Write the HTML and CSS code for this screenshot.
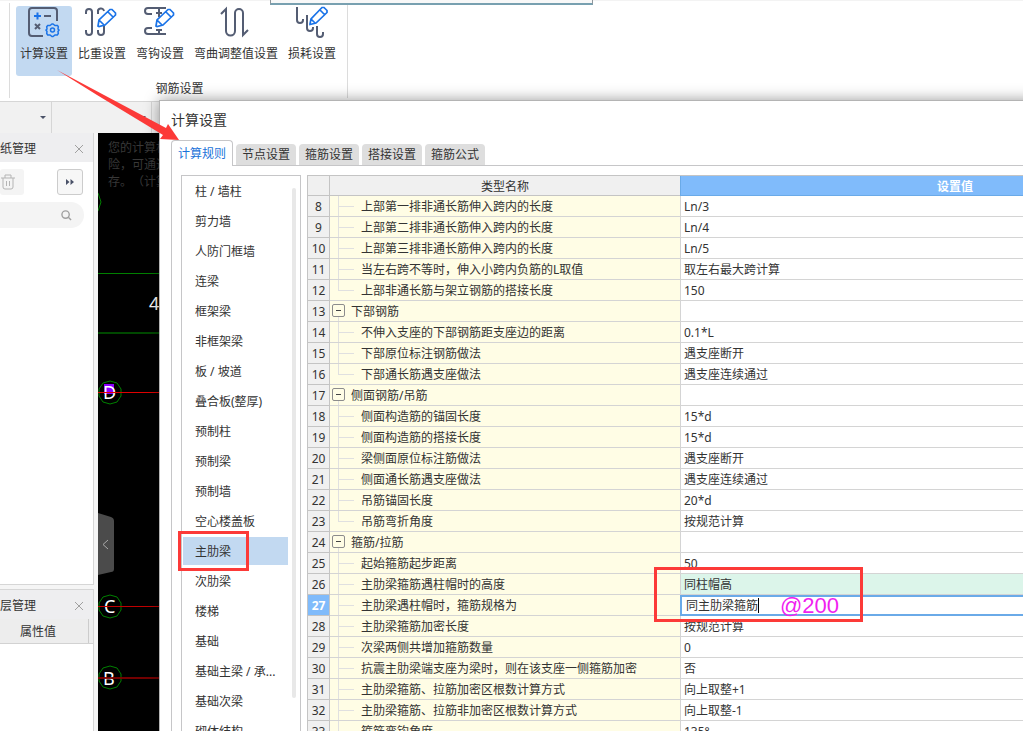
FILE: index.html
```html
<!DOCTYPE html>
<html lang="zh-CN">
<head>
<meta charset="utf-8">
<title>计算设置</title>
<link rel="stylesheet" href="styles.css">
</head>
<body>
<div class="app">
  <header class="ribbon">
    <section class="ribbon-group">
      <div class="tools">
        <button class="tool active">
          <svg class="tool-icon" viewBox="0 0 32 32"><path class="ink" d="M15 30H4a3 3 0 0 1-3-3V5a3 3 0 0 1 3-3h22a3 3 0 0 1 3 3v10M16 10h7M7 18l5 5M12 18l-5 5"/><path class="blue" d="M6 10h7M9.500 6.500v7"/><path class="blue thin" d="M22 19.500l2 -1.500h1l2 1.500 2.500 0 .8 1.200-.3 2.300 1 1-1 1.500 .3 2-1 1.500-2.300 0-2 1.500h-1l-2-1.500-2.300 0-1-1.500 .3-2-1-1.500 1-1-.3-2.300 1-1.200z"/><circle class="blue thin" cx="24.500" cy="24" r="2"/></svg>
          <span>计算设置</span>
        </button>
        <button class="tool">
          <svg class="tool-icon" viewBox="0 0 32 32"><path class="ink" d="M0 8V6a3 3 0 0 1 6 0v20a3 3 0 0 1-6 0v-2M12 8V6a3 3 0 0 1 6-1M18 20v6a3 3 0 0 1-6 0v-2"/><path class="blue pencil" d="M12 20l1-6L24 3.500h2l3.500 3.500v2L19 19l-6 1.500zM22 6l5 5M13 14l5 5"/></svg>
          <span>比重设置</span>
        </button>
        <button class="tool">
          <svg class="tool-icon" viewBox="0 0 32 32"><path class="ink" d="M8 8H4a3 3 0 0 1 0-6h18M15 2v9M12 7h6M8 22H4a3 3 0 0 0 0 6h18M15 28v-5M12 24h6"/><path class="blue pencil" d="M12 20l1-6L24 3.500h2l3.500 3.500v2L19 19l-6 1.500zM22 6l5 5M13 14l5 5"/></svg>
          <span>弯钩设置</span>
        </button>
        <button class="tool">
          <svg class="tool-icon" viewBox="0 0 32 32"><path class="ink" d="M1 8l5-5v22a4.500 4.500 0 0 0 9 0V7a4 4 0 0 1 8 0v22l5-5"/></svg>
          <span>弯曲调整值设置</span>
        </button>
        <button class="tool">
          <svg class="tool-icon" viewBox="0 0 32 32"><path class="ink" d="M1 1v13a3 3 0 0 0 6 0v-1M11 9v13a3 3 0 0 0 6 0v-1M21 20v8a3 3 0 0 0 6 0v-2"/><path class="blue pencil" d="M14 18l1-5L26 1.500h2l3 3v2L20 17l-6 1.500zM24 4l4.500 4.500M15 13l4.500 4.500"/></svg>
          <span>损耗设置</span>
        </button>
      </div>
      <h2 class="group-title">钢筋设置</h2>
    </section>
    <div class="float-strip"></div>
  </header>

  <div class="subbar">
    <button class="drop drop-a" aria-label="选择楼层"></button>
    <button class="drop drop-b" aria-label="选择构件"></button>
  </div>

  <main class="work">
    <aside class="side">
      <section class="panel panel-top">
        <header class="panel-head"><h3>纸管理</h3><button class="close" aria-label="关闭"><svg viewBox="0 0 10 10"><path d="M1 1l8 8M9 1l-8 8"/></svg></button></header>
        <div class="panel-tools">
          <button class="trash" aria-label="删除"><svg viewBox="0 0 16 16"><path d="M1 4h14M5 4V1h6v3M3 4v9a2 2 0 0 0 2 2h6a2 2 0 0 0 2-2V4M6.500 7v5M9.500 7v5"/></svg></button>
          <button class="more" aria-label="更多"><svg viewBox="0 0 8 6"><path d="M0 0l3.500 3L0 6zM4.500 0L8 3 4.500 6z"/></svg></button>
        </div>
        <label class="search"><input type="text" aria-label="搜索"><svg viewBox="0 0 12 12"><circle cx="5" cy="5" r="4"/><path d="M8 8l3 3"/></svg></label>
      </section>
      <section class="panel panel-low">
        <header class="panel-head"><h3>层管理</h3><button class="close" aria-label="关闭"><svg viewBox="0 0 10 10"><path d="M1 1l8 8M9 1l-8 8"/></svg></button></header>
        <div class="prop-head"><span>属性值</span></div>
      </section>
    </aside>
    <div class="canvas">
      <svg class="drawing" width="62" height="598" viewBox="0 0 62 598">
        <path d="M0 60l3 9-3 9" fill="none" stroke="#008000"/>
        <path d="M0 140.500h62" stroke="#008000"/>
        <path d="M0 200h62" stroke="#004800" stroke-width="2"/>
        <rect x="6" y="251" width="10" height="10" fill="#8a00ff"/>
        <g fill="none" stroke="#008000">
          <path id="bubble" d="M12 248l7 2 4 6v7l-4 6-7 2-7-2-4-6v-7l4-6z"/>
          <use href="#bubble" y="214"/>
          <use href="#bubble" y="285"/>
        </g>
        <g class="axis">
          <text x="51" y="177">4</text>
          <text x="5" y="266">D</text>
          <text x="6" y="480">C</text>
          <text x="5" y="552">B</text>
        </g>
        <path d="M0 259.500h62" stroke="#e00000"/>
        <path d="M0 473.500h62" stroke="#c00000"/>
        <path d="M0 545h62" stroke="#800000" stroke-width="2" opacity=".9"/>
        <path d="M0 380l13 4q3 1 3 4v48q0 3-3 3L0 442z" fill="#4b4b4b"/>
        <path d="M10 407l-5 4.500 5 4.500" fill="none" stroke="#aaa"/>
      </svg>
      <p class="notice">您的计算机<br>险，可通过<br>存。（计算</p>
    </div>
  </main>

  <div class="dialog" role="dialog" aria-labelledby="dlg-title">
    <h1 id="dlg-title">计算设置</h1>
    <nav class="tabs">
      <button class="tab on">计算规则</button>
      <button class="tab">节点设置</button>
      <button class="tab">箍筋设置</button>
      <button class="tab">搭接设置</button>
      <button class="tab">箍筋公式</button>
    </nav>
    <div class="pane">
      <div class="kinds">
        <ul>
          <li><button>柱 / 墙柱</button></li>
          <li><button>剪力墙</button></li>
          <li><button>人防门框墙</button></li>
          <li><button>连梁</button></li>
          <li><button>框架梁</button></li>
          <li><button>非框架梁</button></li>
          <li><button>板 / 坡道</button></li>
          <li><button>叠合板(整厚)</button></li>
          <li><button>预制柱</button></li>
          <li><button>预制梁</button></li>
          <li><button>预制墙</button></li>
          <li><button>空心楼盖板</button></li>
          <li><button class="picked">主肋梁</button></li>
          <li><button>次肋梁</button></li>
          <li><button>楼梯</button></li>
          <li><button>基础</button></li>
          <li><button>基础主梁 / 承...</button></li>
          <li><button>基础次梁</button></li>
          <li><button>砌体结构</button></li>
        </ul>
        <div class="thumb"></div>
      </div>
      <div class="grid-wrap">
      <table class="rules">
        <colgroup><col class="c-num"><col class="c-name"><col></colgroup>
        <thead><tr><th></th><th>类型名称</th><th class="val-head">设置值</th></tr></thead>
        <tbody>
          <tr><th>8</th><td class="leaf">上部第一排非通长筋伸入跨内的长度</td><td>Ln/3</td></tr>
          <tr><th>9</th><td class="leaf">上部第二排非通长筋伸入跨内的长度</td><td>Ln/4</td></tr>
          <tr><th>10</th><td class="leaf">上部第三排非通长筋伸入跨内的长度</td><td>Ln/5</td></tr>
          <tr><th>11</th><td class="leaf">当左右跨不等时，伸入小跨内负筋的L取值</td><td>取左右最大跨计算</td></tr>
          <tr><th>12</th><td class="leaf end">上部非通长筋与架立钢筋的搭接长度</td><td>150</td></tr>
          <tr><th>13</th><td class="branch"><button class="fold" aria-label="折叠"></button>下部钢筋</td><td></td></tr>
          <tr><th>14</th><td class="leaf">不伸入支座的下部钢筋距支座边的距离</td><td>0.1*L</td></tr>
          <tr><th>15</th><td class="leaf">下部原位标注钢筋做法</td><td>遇支座断开</td></tr>
          <tr><th>16</th><td class="leaf end">下部通长筋遇支座做法</td><td>遇支座连续通过</td></tr>
          <tr><th>17</th><td class="branch"><button class="fold" aria-label="折叠"></button>侧面钢筋/吊筋</td><td></td></tr>
          <tr><th>18</th><td class="leaf">侧面构造筋的锚固长度</td><td>15*d</td></tr>
          <tr><th>19</th><td class="leaf">侧面构造筋的搭接长度</td><td>15*d</td></tr>
          <tr><th>20</th><td class="leaf">梁侧面原位标注筋做法</td><td>遇支座断开</td></tr>
          <tr><th>21</th><td class="leaf">侧面通长筋遇支座做法</td><td>遇支座连续通过</td></tr>
          <tr><th>22</th><td class="leaf">吊筋锚固长度</td><td>20*d</td></tr>
          <tr><th>23</th><td class="leaf end">吊筋弯折角度</td><td>按规范计算</td></tr>
          <tr><th>24</th><td class="branch"><button class="fold" aria-label="折叠"></button>箍筋/拉筋</td><td></td></tr>
          <tr><th>25</th><td class="leaf">起始箍筋起步距离</td><td>50</td></tr>
          <tr><th>26</th><td class="leaf">主肋梁箍筋遇柱帽时的高度</td><td class="changed">同柱帽高</td></tr>
          <tr class="current"><th>27</th><td class="leaf">主肋梁遇柱帽时，箍筋规格为</td><td class="editing"><div class="editor"><input type="text" value="同主肋梁箍筋" aria-label="箍筋规格"><i class="caret"></i></div></td></tr>
          <tr><th>28</th><td class="leaf">主肋梁箍筋加密长度</td><td>按规范计算</td></tr>
          <tr><th>29</th><td class="leaf">次梁两侧共增加箍筋数量</td><td>0</td></tr>
          <tr><th>30</th><td class="leaf">抗震主肋梁端支座为梁时，则在该支座一侧箍筋加密</td><td>否</td></tr>
          <tr><th>31</th><td class="leaf">主肋梁箍筋、拉筋加密区根数计算方式</td><td>向上取整+1</td></tr>
          <tr><th>32</th><td class="leaf">主肋梁箍筋、拉筋非加密区根数计算方式</td><td>向上取整-1</td></tr>
          <tr><th>33</th><td class="leaf">箍筋弯钩角度</td><td>135°</td></tr>
        </tbody>
      </table>
      </div>
    </div>
  </div>

  <svg class="arrow" viewBox="0 0 124 72"><path d="M1 0L48 25l62 33 2-4 11 16-19-1 3-4-66-40z"/></svg>
  <div class="mark mark-list"></div>
  <div class="mark mark-cell"></div>
  <span class="note">@200</span>
</div>
</body>
</html>
```

FILE: styles.css
```css
* { box-sizing: border-box; }

body {
  margin: 0;
  font: 12px/20px "Noto Sans", "Noto Sans CJK SC", sans-serif;
  text-spacing-trim: space-all;
  color: #333;
  background: #fff;
}

h1, h2, h3, p, ul { margin: 0; padding: 0; font-weight: normal; }
ul { list-style: none; }

button, input {
  margin: 0;
  padding: 0;
  border: 0;
  background: none;
  font: inherit;
  color: inherit;
}

.app {
  position: relative;
  display: flex;
  flex-direction: column;
  height: 100vh;
  overflow: hidden;
}

/* ribbon */
.ribbon {
  position: relative;
  display: flex;
  padding: 2px 0 3px 9px;
  border-top: 1px solid #f3f3f3;
}
.ribbon-group {
  padding: 3px 7px 0 6px;
  border: solid #dcdcdc;
  border-width: 0 1px;
}
.tools { display: flex; gap: 2px; }
.tool {
  display: flex;
  flex-direction: column;
  align-items: center;
  height: 70px;
  padding: 0 4px;
  gap: 6px;
  border-radius: 3px;
}
.tool.active { background: #c2d9f1; }
.tool-icon { width: 32px; height: 32px; fill: none; overflow: visible; }
.ink { stroke: #545d73; stroke-width: 2; }
.blue { stroke: #1a73e8; stroke-width: 2; }
.thin { stroke-width: 1.5; }
.pencil { stroke-width: 1.7; fill: #fff; }
.group-title {
  padding: 4px 0 0 3px;
  font-size: 12px;
  line-height: 18px;
  text-align: center;
}
.float-strip {
  position: absolute;
  top: -1px;
  left: 270px;
  width: 323px;
  height: 5px;
  background: #f8f8f8;
  border: solid #8f979c;
  border-width: 0 1px 2px;
  border-bottom-color: #78a0b0;
}

/* strip under the ribbon */
.subbar {
  display: flex;
  height: 32px;
  background: #f1f1f1;
  border-top: 1px solid #d6d6d6;
}
.drop {
  display: flex;
  align-items: center;
  justify-content: flex-end;
  padding-right: 5px;
  border-right: 1px solid #d6d6d6;
}
.drop::after {
  content: "";
  border: 3px solid transparent;
  border-top-color: #4a5268;
  border-bottom-width: 0;
}
.drop-a { width: 52px; }
.drop-b { width: 100px; }

/* left panels */
.work { flex: 1; display: flex; min-height: 0; }
.side {
  display: flex;
  flex-direction: column;
  gap: 4px;
  width: 98px;
  padding-right: 4px;
  background: #f5f5f5;
}
.panel { background: #fff; border: 1px solid #d6d6d6; border-left: 0; }
.panel-top { flex: 0 0 452px; border-top: 0; }
.panel-low { flex: 1; border-bottom: 0; }
.panel-head {
  display: flex;
  align-items: center;
  justify-content: space-between;
  height: 29px;
  padding: 2px 9px 0 0;
  background: #eeeef0;
}
.panel-head h3 { font-size: 12px; }
.close { display: flex; }
.close svg { width: 10px; height: 10px; stroke: #a0a0a0; fill: none; }
.panel-tools {
  display: flex;
  justify-content: space-between;
  padding: 7px 10px 7px 0;
}
.trash, .more {
  display: flex;
  align-items: center;
  height: 26px;
  background: #f4f4f4;
  border-radius: 3px;
}
.trash { width: 24px; }
.trash svg { width: 16px; height: 16px; fill: none; stroke: #b4b4b4; }
.more { justify-content: center; width: 26px; border: 1px solid #ccc; background: #f7f7f7; }
.more svg { width: 8px; height: 6px; fill: #4a5268; }
.search {
  display: flex;
  align-items: center;
  height: 26px;
  margin-right: 9px;
  padding-right: 12px;
  border-radius: 0 13px 13px 0;
  background: #f4f4f4;
}
.search input { flex: 1; min-width: 0; }
.search svg { width: 11px; height: 11px; fill: none; stroke: #a0a0a0; stroke-width: 1.5; }
.prop-head {
  display: flex;
  height: 25px;
  background: #ededed;
  border: solid #d2d2d2;
  border-width: 0 0 1px;
}
.prop-head span {
  width: 89px;
  padding-left: 20px;
  line-height: 26px;
  border-right: 1px solid #ccc;
}

/* drawing area */
.canvas { position: relative; flex: 1; background: #000; overflow: hidden; }
.drawing { display: block; }
.axis text { font: 18px "Noto Sans", sans-serif; fill: #fff; }
.notice {
  position: absolute;
  top: 6px;
  left: 10px;
  color: #383838;
  line-height: 17px;
  white-space: nowrap;
}

/* dialog */
.dialog {
  position: absolute;
  top: 100px;
  right: -218px;
  bottom: -40px;
  left: 159px;
  display: flex;
  flex-direction: column;
  padding-left: 11px;
  background: #fff;
  border: 1px solid #b4b4b4;
  box-shadow: 0 0 14px rgba(0, 0, 0, .4);
}
.dialog h1 { padding-bottom: 2px; font-size: 14px; line-height: 37px; }
.tabs {
  display: flex;
  align-items: flex-end;
  gap: 3px;
  border-bottom: 1px solid #c6c6c8;
}
.tab {
  height: 21px;
  padding: 0 6px;
  border-radius: 4px 4px 0 0;
  background: #dedede;
  line-height: 21px;
}
.tab.on {
  height: 26px;
  margin-bottom: -1px;
  border: 1px solid #c6c6c8;
  border-bottom: 0;
  background: #fff;
  color: #1a73d9;
}
.pane {
  flex: 1;
  display: flex;
  gap: 6px;
  min-height: 0;
  padding: 9px 10px 0 9px;
  border-left: 1px solid #c6c6c8;
}
.kinds {
  display: flex;
  justify-content: space-between;
  flex: 0 0 120px;
  padding: 1px 4px 0 1px;
  border: 1px solid #c6c6c8;
  overflow: hidden;
}
.kinds ul { flex: 0 0 105px; }
.kinds li { margin-bottom: 2px; }
.kinds button {
  width: 100%;
  height: 28px;
  padding: 2px 0 0 12px;
  text-align: left;
  white-space: nowrap;
}
.kinds .picked { background: #c2d9f1; }
.thumb { width: 4px; height: 510px; margin-top: 11px; border-radius: 2px; background: #e8e8e8; }

/* rules table */
.grid-wrap { flex: 1; overflow: hidden; border: solid #c4c4c4; border-width: 1px 0 0 1px; }
.rules {
  width: 100%;
  table-layout: fixed;
  border-collapse: separate;
  border-spacing: 0;
}
.c-num { width: 22px; }
.c-name { width: 350px; }
.rules th, .rules td {
  height: 21px;
  padding: 2px 0 0;
  border-bottom: 1px solid #d4d4d4;
  line-height: 18px;
  font-weight: normal;
  white-space: nowrap;
}
.rules th {
  background: #f0f0f0;
  border-right: 1px solid #c4c4c4;
  border-bottom-color: #c4c4c4;
}
.rules thead th { height: 20px; line-height: 17px; }
.rules thead th:nth-child(2) { border-right: 0; }
.rules .val-head {
  background: #80bbfb;
  border: 1px solid #6aaae8;
  border-top: 0;
  color: #fff;
  font-weight: bold;
}
.rules td:nth-child(3) { padding-left: 3px; border-left: 1px solid #d4d4d4; }
.rules .leaf, .rules .branch { position: relative; background: #fffde5; }
.rules .leaf { padding-left: 31px; }
.rules .branch { padding-left: 21px; }
.leaf::before, .leaf::after, .branch::before {
  content: "";
  position: absolute;
  left: 8px;
  background: #e0e0e0;
}
.leaf::before { top: 0; bottom: 0; width: 1px; }
.leaf.end::before { bottom: 10px; }
.leaf::after { top: 10px; width: 16px; height: 1px; }
.branch::before { top: 16px; bottom: 0; width: 1px; }
.fold {
  position: absolute;
  top: 3px;
  left: 2px;
  display: flex;
  align-items: center;
  justify-content: center;
  width: 13px;
  height: 13px;
  border: 1px solid #8c8c8c;
  border-radius: 2px;
  background: #fffde5;
}
.fold::after { content: ""; width: 5px; height: 1px; background: #444; }
.rules .changed { background: #dcf5ea; }
.rules .current th {
  background: #80bbfb;
  color: #fff;
  font-weight: bold;
}
.rules td.editing { padding: 0; border: 0; }
.editor {
  display: flex;
  align-items: center;
  height: 21px;
  padding-left: 4px;
  border: 2px solid #6aaae8;
  background: #fff;
}
.editor input { height: 17px; line-height: 17px; field-sizing: content; outline: 0; }
.caret { width: 1px; height: 15px; background: #000; }

/* annotations */
.arrow { position: absolute; top: 70px; left: 56px; width: 124px; height: 72px; fill: #fc3a38; overflow: visible; }
.mark { position: absolute; border: 3px solid #fc3a38; }
.mark-list { top: 531px; left: 178px; width: 71px; height: 40px; }
.mark-cell { top: 567px; left: 654px; width: 209px; height: 55px; }
.note {
  position: absolute;
  top: 594px;
  left: 780px;
  font: 22px/24px "Liberation Sans", sans-serif;
  color: #f01ff0;
}
```
